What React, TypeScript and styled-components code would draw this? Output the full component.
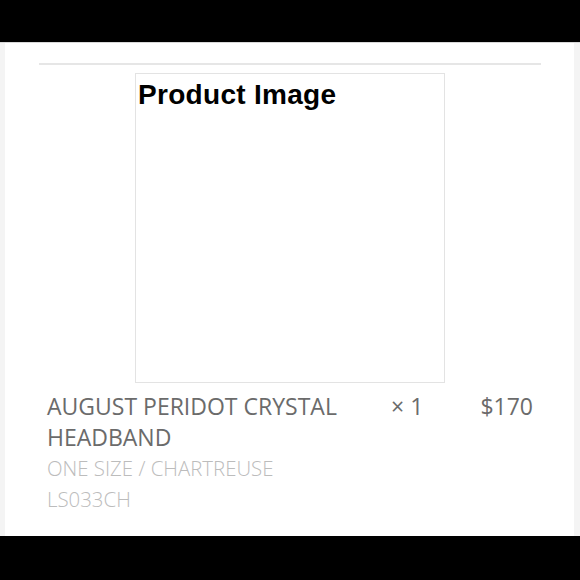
import React from "react";
import styled, { createGlobalStyle } from "styled-components";

const GlobalStyle = createGlobalStyle`
  html, body {
    margin: 0;
    padding: 0;
    background: #000;
  }
`;

const Screen = styled.div`
  width: 580px;
  height: 580px;
  background: #000;
  padding-top: 42px;
  box-sizing: border-box;
`;

const Panel = styled.div`
  height: 494px;
  box-sizing: border-box;
  background: #f4f4f4;
  border-top: 1px solid #d8d8d8;
  padding: 0 6px 0 5px;
  overflow: hidden;
`;

const Sheet = styled.div`
  height: 100%;
  background: #fff;
  padding: 20px 33px 0 34px;
  box-sizing: border-box;
`;

const Item = styled.div`
  border-top: 2px solid #e6e6e6;
  border-bottom: 1px solid #e6e6e6;
  padding: 8px 8px 21px 8px;
  display: flex;
  flex-direction: column;
  align-items: center;
`;

const ImageBox = styled.div`
  width: 310px;
  height: 310px;
  box-sizing: border-box;
  border: 1px solid #e3e3e3;
  padding: 5px 2px;
  font-family: "Liberation Sans", Arial, sans-serif;
  font-weight: 700;
  font-size: 28px;
  letter-spacing: 0.3px;
  color: #000;
  line-height: 32px;
`;

const Row = styled.div`
  align-self: stretch;
  display: grid;
  grid-template-columns: 344px 1fr auto;
  margin-top: 8px;
  font-family: "Open Sans", sans-serif;
  color: #6b6b6b;
  font-size: 23px;
  line-height: 31px;
`;

const Name = styled.div`
  display: flex;
  flex-direction: column;
`;

const Detail = styled.span<{ $muted?: boolean }>`
  color: ${(p) => (p.$muted ? "#bcbcbc" : "#6b6b6b")};
  font-size: ${(p) => (p.$muted ? "20.4px" : "23px")};
  font-weight: ${(p) => (p.$muted ? 300 : 400)};
`;

const Qty = styled.div`
  white-space: nowrap;
`;

const Price = styled.div`
  text-align: right;
`;

export default function App() {
  return (
    <>
      <GlobalStyle />
      <Screen>
        <Panel>
          <Sheet>
            <Item>
              <ImageBox>Product Image</ImageBox>
              <Row>
                <Name>
                  <Detail>AUGUST PERIDOT CRYSTAL HEADBAND</Detail>
                  <Detail $muted>ONE SIZE / CHARTREUSE</Detail>
                  <Detail $muted>LS033CH</Detail>
                </Name>
                <Qty>× 1</Qty>
                <Price>$170</Price>
              </Row>
            </Item>
          </Sheet>
        </Panel>
      </Screen>
    </>
  );
}
